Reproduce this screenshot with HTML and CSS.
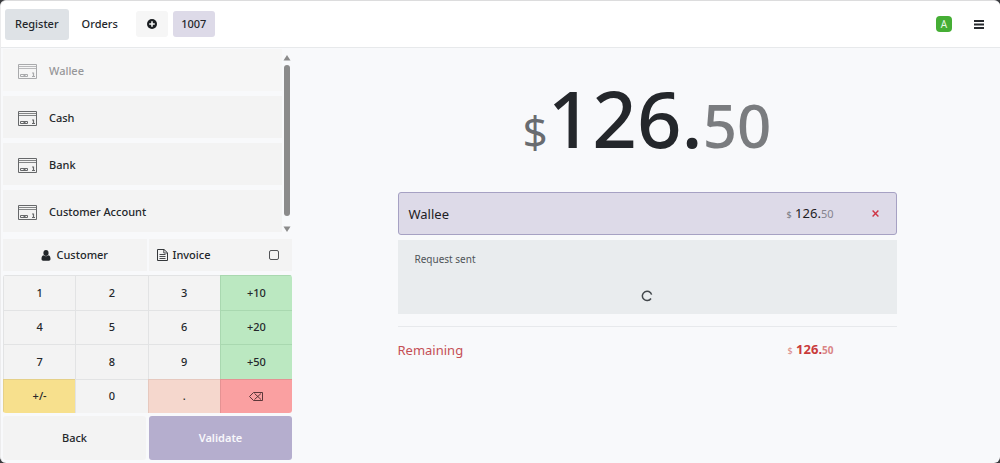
FILE: index.html
```html
<!DOCTYPE html>
<html lang="en">
<head>
<meta charset="utf-8">
<title>Point of Sale - Payment</title>
<link rel="stylesheet" href="styles.css">
</head>
<body>
<svg class="defs" aria-hidden="true">
  <symbol id="card" viewBox="0 0 19 15">
    <g fill="none" stroke="currentColor">
      <path d="M.5.5h18v14H.5z"/>
      <path d="M1 2.500h17M1 4.500h17" stroke-width=".8"/>
      <path d="M2.500 10.500h7v2h-7zM5.500 11.500h2" stroke-width="1"/>
      <path d="M14 9h1.500v4M14 12.500h3" stroke-width="1.200"/>
    </g>
  </symbol>
</svg>
<div class="app">
  <header class="topbar">
    <nav class="tabs">
      <button class="tab tab-active">Register</button>
      <button class="tab">Orders</button>
      <button class="chip chip-add" aria-label="New order">
        <svg width="10" height="10" viewBox="0 0 10 10"><circle cx="5" cy="5" r="5" fill="#1b1e22"/><path d="M5 2.200v5.600M2.200 5h5.600" stroke="#f6f7f7" stroke-width="1.600"/></svg>
      </button>
      <button class="chip chip-order">1007</button>
    </nav>
    <div class="tools">
      <span class="avatar">A</span>
      <button class="menu" aria-label="Menu">
        <svg width="10" height="9" viewBox="0 0 10 9"><path d="M0 1h10M0 4.500h10M0 8h10" stroke="#25282c" stroke-width="1.800"/></svg>
      </button>
    </div>
  </header>
  <div class="body">
    <aside class="side">
      <div class="methods">
        <div class="method-list">
          <button class="method" disabled><svg class="card"><use href="#card"/></svg>Wallee</button>
          <button class="method"><svg class="card"><use href="#card"/></svg>Cash</button>
          <button class="method"><svg class="card"><use href="#card"/></svg>Bank</button>
          <button class="method"><svg class="card"><use href="#card"/></svg>Customer Account</button>
        </div>
        <div class="scroll" aria-hidden="true">
          <svg width="8" height="6" viewBox="0 0 8 6"><path d="M4 0l3.500 5.500H.5z" fill="#8b8b8b"/></svg>
          <div class="thumb"></div>
          <svg width="8" height="6" viewBox="0 0 8 6"><path d="M4 6L.5.5h7z" fill="#8b8b8b"/></svg>
        </div>
      </div>
      <div class="options">
        <button class="option option-customer">
          <svg width="10" height="11" viewBox="0 0 10 11" fill="#212529"><ellipse cx="5" cy="3" rx="2.600" ry="3"/><path d="M2.500 5.200C.8 5.500.5 7.500.5 9c0 1.200.7 1.700 1.600 1.700h5.800c.9 0 1.600-.5 1.600-1.700 0-1.500-.3-3.500-2-3.800-1.400 1.300-3.600 1.300-5 0z"/></svg>
          Customer
        </button>
        <label class="option option-invoice">
          <svg width="11" height="12" viewBox="0 0 11 12" fill="none" stroke="#34373a"><path d="M.5.5h6.500l3.500 3.300v7.700H.5z"/><path d="M6.800.5v3.500h3.700M2.500 5.500h6M2.500 7.500h6M2.500 9.500h6" stroke-width=".9"/></svg>
          Invoice
          <input type="checkbox" class="check">
        </label>
      </div>
      <div class="keypad">
        <button class="key">1</button><button class="key">2</button><button class="key">3</button><button class="key key-add">+10</button>
        <button class="key">4</button><button class="key">5</button><button class="key">6</button><button class="key key-add">+20</button>
        <button class="key">7</button><button class="key">8</button><button class="key">9</button><button class="key key-add">+50</button>
        <button class="key key-sign">+/-</button><button class="key">0</button><button class="key key-dot">.</button>
        <button class="key key-del" aria-label="Delete"><svg width="14" height="9" viewBox="0 0 14 9" fill="none" stroke="#4a2b2e" stroke-width=".9"><path d="M4.500.5h9v8h-9l-4-4zM5.500 1.500l6.500 6M12 1.500l-6.500 6"/></svg></button>
      </div>
      <div class="actions">
        <button class="action">Back</button>
        <button class="action action-primary">Validate</button>
      </div>
    </aside>
    <main class="main">
      <div class="total"><span class="total-cur">$</span><span class="total-int">126.</span><span class="total-dec">50</span></div>
      <section class="payment">
        <div class="line">
          <span class="line-name">Wallee</span>
          <span class="amount"><small>$</small> 126.<span class="dec">50</span></span>
          <button class="remove" aria-label="Remove payment"><svg width="7" height="7" viewBox="0 0 7 7"><path d="M.6.6l5.800 5.800M6.400.6L.6 6.400" stroke="#cf3444" stroke-width="1.400"/></svg></button>
        </div>
        <div class="status">
          <p class="status-text">Request sent</p>
          <svg class="spinner" width="12" height="12" viewBox="0 0 12 12" fill="none" stroke="#42474b" stroke-width="1.500"><path d="M10.600 4.600A4.700 4.700 0 1 0 10 8.500"/></svg>
        </div>
        <div class="remaining">
          <span class="line-name">Remaining</span>
          <span class="amount amount-due"><small>$</small> 126.<span class="dec">50</span></span>
        </div>
      </section>
    </main>
  </div>
</div>
</body>
</html>
```
FILE: styles.css
```css
* { box-sizing: border-box; }
body {
  margin: 0;
  background: #3a3b3e;
  color: #24272b;
  font: 500 11px/16px "Noto Sans", "Open Sans", sans-serif;
}
button { margin: 0; padding: 0; border: 0; background: none; color: inherit; font: inherit; }
svg { display: block; flex: none; }
.defs { position: absolute; width: 0; height: 0; }
.app {
  display: flex;
  flex-direction: column;
  min-height: 100vh;
  overflow: hidden;
  background: #f8f9fb;
  border-top: 1px solid #dcdcdd;
  border-left: 1px solid #ececed;
  border-radius: 6px;
}
.topbar {
  display: flex;
  align-items: center;
  justify-content: space-between;
  height: 47px;
  padding: 0 16px 0 4px;
  background: #fff;
  border-bottom: 1px solid #e7e9eb;
}
.tabs, .tools { display: flex; align-items: center; }
.tab { height: 31px; padding: 0 10px; border-radius: 3px; }
.tab-active { background: #dee2e6; }
.tab + .tab { padding: 0 13px; }
.chip { display: flex; align-items: center; justify-content: center; height: 26px; border-radius: 3px; }
.chip-add { width: 32px; margin-left: 5px; background: #f6f6f6; }
.chip-order { width: 42px; margin-left: 5px; background: #dddae8; }
.tools { gap: 22px; }
.avatar {
  width: 16px;
  border-radius: 4px;
  background: #45ae35;
  color: #e6f7e2;
  font-size: 10px;
  font-weight: 400;
  text-align: center;
}
.body { display: flex; flex: 1; }
.side { display: flex; flex-direction: column; width: 292px; padding: 1px 1px 3px 2px; }
.methods { display: flex; height: 185px; }
.method-list { display: flex; flex: 1; flex-direction: column; gap: 5px; }
.method {
  display: flex;
  align-items: center;
  gap: 12px;
  height: 42px;
  padding: 2px 15px 0;
  background: #f3f3f3;
  text-align: left;
}
.method:disabled { background: #f6f6f6; color: #969799; }
.card { width: 19px; height: 15px; color: #66686a; }
.method:disabled .card { color: #a9aaac; }
.scroll { display: flex; flex-direction: column; align-items: center; gap: 4px; width: 10px; padding: 6px 0 0; }
.thumb { flex: 1; width: 6px; max-height: 151px; border-radius: 3px; background: #8b8b8b; }
.scroll svg:last-child { margin-top: 6px; }
.options { display: grid; grid-template-columns: 1fr 1fr; gap: 2px; margin-top: 5px; }
.option { display: flex; align-items: center; gap: 5px; height: 32px; background: #f3f3f3; }
.option-customer { justify-content: center; }
.option-invoice { padding: 0 13px 0 8px; }
.check { appearance: none; width: 10px; height: 10px; margin: 0 0 0 auto; border: 1px solid #515356; border-radius: 2px; }
.keypad {
  display: grid;
  grid-template-columns: repeat(4, 1fr);
  grid-auto-rows: 1fr;
  flex: 1;
  margin: 4px 0 3px;
  border-radius: 3px;
  overflow: hidden;
}
.key { display: flex; align-items: center; justify-content: center; border: solid #e2e3e4; border-width: 1px 0 0 1px; background: #f3f3f3; }
.key-add { background: #bbe8c1; border-color: #a9d8b0; }
.key-sign { background: #f7e08d; border-color: #e5d088; }
.key-dot { background: #f5d7cd; border-color: #e6c8be; }
.key-del { background: #faa0a1; border-color: #e59293; }
.actions { display: grid; grid-template-columns: 1fr 1fr; gap: 3px; }
.action { height: 44px; border-radius: 3px; background: #f3f3f3; }
.action-primary { background: #b5aece; color: #f8f7fb; font-weight: 600; }
.main { display: flex; flex: 1; flex-direction: column; align-items: center; padding: 22px 15px 0 16px; }
.total { display: flex; align-items: baseline; line-height: 96px; font-weight: 500; }
.total-cur { color: #696c70; font-size: 44px; font-weight: 400; }
.total-int { font-size: 78px; }
.total-dec { color: #7a7c7f; font-size: 60px; }
.payment { width: 100%; max-width: 499px; margin-top: 13px; }
.line, .remaining { display: flex; align-items: center; font-size: 13px; font-weight: 400; line-height: 20px; }
.line { height: 43px; padding: 0 17px 0 10px; border: 1px solid #a6a1c3; border-radius: 3px; background: #dddae8; color: #1d2024; }
.line-name { flex: 1; }
.amount { font-size: 13px; }
.amount small { color: #77777f; font-size: 9px; }
.dec { color: #85848e; font-size: 11px; }
.amount-due .dec { font-size: 10px; }
.remove { display: flex; margin-left: 38px; }
.status { display: flex; flex-direction: column; gap: 23px; margin-top: 5px; padding: 11px 17px 12px; background: #e9ecee; }
.status-text { margin: 0; color: #4f5458; font-size: 10px; font-weight: 400; }
.spinner { align-self: center; }
.remaining { margin-top: 12px; padding: 12px 63px 0 0; border-top: 1px solid #e7e9ec; color: #c54f55; }
.amount-due { color: #c93b3b; font-weight: 700; }
.amount-due small, .amount-due .dec { color: #da8585; }
.amount-due small { font-weight: 400; }
```
